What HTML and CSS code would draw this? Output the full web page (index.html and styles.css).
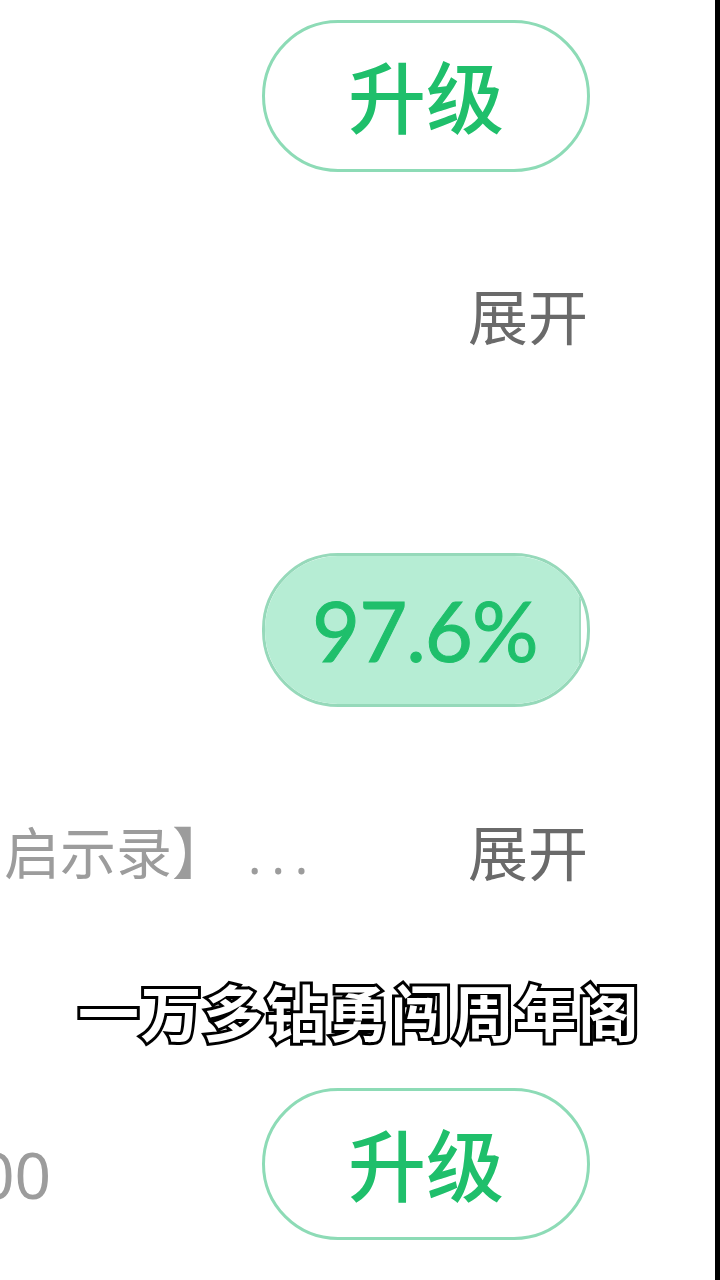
FILE: index.html
```html
<!DOCTYPE html>
<html lang="zh">
<head>
<meta charset="utf-8">
<link rel="stylesheet" href="styles.css">
</head>
<body>
<div class="page">
  <div class="main">
    <div class="row row-1">
      <span class="left"></span>
      <div class="btn outline">升级</div>
    </div>
    <div class="row row-2">
      <span class="left"></span>
      <span class="toggle">展开</span>
    </div>
    <div class="row row-3">
      <span class="left"></span>
      <div class="btn progress">
        <span class="fill" style="width:97.6%"></span>
        <span class="pct">97.6%</span>
      </div>
    </div>
    <div class="row row-4">
      <span class="left desc">启示录】<span class="dots">...</span></span>
      <span class="toggle">展开</span>
    </div>
    <div class="row row-5">
      <span class="left num">00</span>
      <div class="btn outline">升级</div>
    </div>
    <div class="subtitle">一万多钻勇闯周年阁</div>
  </div>
  <div class="edge"></div>
</div>
</body>
</html>
```
FILE: styles.css
```css
html, body {
  margin: 0;
  padding: 0;
  background: #ffffff;
}
.page {
  width: 720px;
  height: 1280px;
  display: flex;
  overflow: hidden;
  font-family: "Noto Sans CJK SC", "Noto Sans", sans-serif;
}
.main {
  flex: 1;
  position: relative;
  background: #ffffff;
  display: flex;
  flex-direction: column;
  padding-right: 125px;
}
.edge {
  width: 5px;
  background: #000000;
}
.row {
  display: flex;
  align-items: center;
  justify-content: space-between;
  flex: none;
}
.row-1 { margin-top: 20px; height: 152px; }
.row-2 { margin-top: 112px; height: 60px; }
.row-3 { margin-top: 209px; height: 154px; }
.row-4 { margin-top: 113px; height: 60px; }
.row-5 { margin-top: 208px; height: 152px; }

.btn {
  width: 328px;
  height: 152px;
  box-sizing: border-box;
  border-radius: 76px;
  display: flex;
  align-items: center;
  justify-content: center;
  color: #1fbf6b;
  position: relative;
  overflow: hidden;
}
.outline {
  border: 3.5px solid #8ddbb6;
  font-size: 78px;
  font-weight: 500;
  line-height: 1;
  padding-bottom: 4px;
}
.progress {
  height: 154px;
  border: 3px solid #96d9ba;
  background: #ffffff;
  justify-content: flex-start;
}
.fill {
  position: absolute;
  left: 0;
  top: 0;
  bottom: 0;
  background: #b6edd4;
  border-right: 2px solid #9fdcc0;
}
.pct {
  position: relative;
  font-family: "Lato", "Noto Sans", sans-serif;
  font-size: 83px;
  line-height: 1;
  padding-left: 47px;
  letter-spacing: -1px;
  -webkit-text-stroke: 1px #1fbf6b;
}
.toggle {
  font-size: 60px;
  line-height: 60px;
  color: #6a6a6a;
  margin-right: 2px;
}
.left {
  display: block;
}
.desc {
  font-size: 56px;
  line-height: 60px;
  height: 60px;
  color: #9c9c9c;
  margin-left: 4px;
  white-space: nowrap;
}
.dots {
  letter-spacing: 10px;
  margin-left: 20px;
  font-size: 50px;
  line-height: 50px;
  font-family: "Noto Sans", sans-serif;
}
.num {
  font-family: "Noto Sans", sans-serif;
  font-size: 64px;
  line-height: 64px;
  color: #9c9c9c;
  margin-left: -22px;
  margin-top: 22px;
}
.subtitle {
  position: absolute;
  left: 78px;
  top: 976px;
  font-size: 61px;
  line-height: 70px;
  font-weight: 700;
  color: #ffffff;
  -webkit-text-stroke: 6px #000000;
  paint-order: stroke fill;
  letter-spacing: 1.5px;
  white-space: nowrap;
}
```
